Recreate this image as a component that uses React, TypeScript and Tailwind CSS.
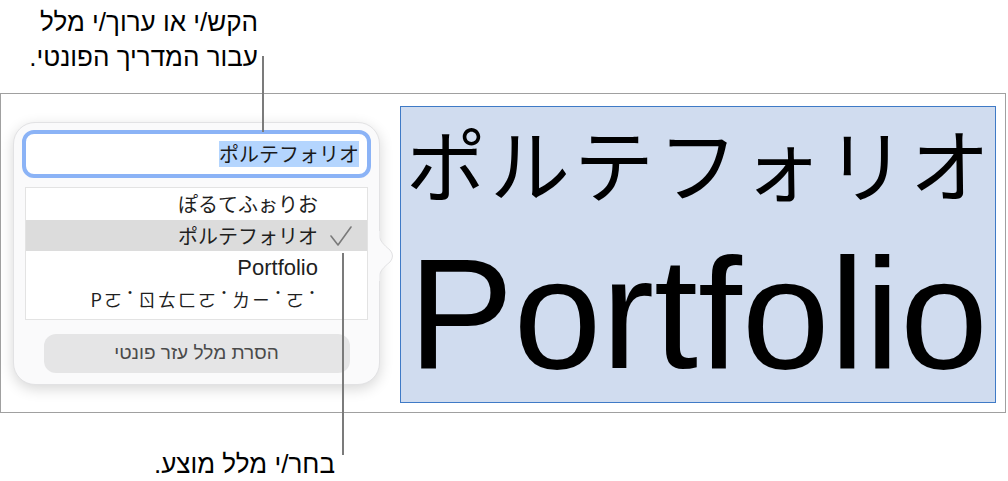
import React from "react";

const hebrew = "font-['Liberation_Sans','DejaVu_Sans',sans-serif]";
const jp = "font-['Noto_Sans_CJK_JP',sans-serif]";

// Suggested readings shown in the popover list
const suggestions = [
  { text: "ぽるてふぉりお", font: jp, size: "text-[20px]" },
  { text: "ポルテフォリオ", font: jp, size: "text-[20px]", selected: true },
  { text: "Portfolio", font: "font-['Liberation_Sans',sans-serif]", size: "text-[22px]" },
];

// Bopomofo reading, tone dots are raised
const bopomofo = ["P", "ㄛ", "˙", "ㄖ", "ㄊ", "ㄈ", "ㄛ", "˙", "ㄌ", "ㄧ", "˙", "ㄛ", "˙"];

function Check() {
  return (
    <svg width="24" height="22" viewBox="0 0 24 22" className="absolute right-[14px] top-[5px]">
      <path d="M2 11 L9 20 L22 2" fill="none" stroke="#7a7a7a" strokeWidth="1.6" strokeLinecap="round" strokeLinejoin="round" />
    </svg>
  );
}

function Popover() {
  return (
    <div className="relative mt-[28px] ml-[12px] w-[367px] h-[263px] rounded-[22px] bg-[#fafafb] border border-[#e2e2e4] shadow-[0_4px_14px_rgba(0,0,0,0.16)] flex flex-col items-center pt-[7px]">
      {/* arrow pointing at the text box */}
      <svg width="18" height="50" viewBox="0 0 18 50" className="absolute -right-[17px] top-[108px]">
        <path d="M0 0 C1 10 6 14 12 19 Q17 25 12 31 C6 36 1 40 0 50 Z" fill="#fafafb" stroke="#e2e2e4" strokeWidth="1" />
        <rect x="0" y="0" width="1.5" height="50" fill="#fafafb" />
      </svg>

      <div className="w-[349px] h-[48px] rounded-[12px] border-[4px] border-[#8bb3f6] bg-white flex items-center justify-end pr-[8px]">
        <span className={`${jp} text-[20px] leading-[26px] bg-[#b4d5fe] text-[#1a1a1a]`}>ポルテフォリオ</span>
      </div>

      <div className="mt-[9px] w-[343px] border border-[#e3e3e3] bg-white pb-[4px]">
        {suggestions.map((s, idx) => (
          <div
            key={idx}
            className={`relative flex items-center justify-end pr-[49px] text-[#1f1f1f] ${s.font} ${s.size} ${s.selected ? "bg-[#dcdcdc] h-[31px]" : "h-[32px]"}`}
          >
            <span>{s.text}</span>
            {s.selected && <Check />}
          </div>
        ))}
        <div className="h-[32px] flex items-center justify-end pr-[48px] text-[#1f1f1f] font-['Noto_Sans_CJK_TC',sans-serif] text-[18px]">
          {bopomofo.map((c, i) =>
            c === "˙" ? (
              <span key={i} className="relative -top-[7px] mx-[3px] text-[16px]">
                {c}
              </span>
            ) : (
              <span key={i} className="mx-[1px]">
                {c}
              </span>
            )
          )}
        </div>
      </div>

      <button className={`mt-[14px] w-[306px] h-[39px] rounded-[12px] bg-[#e5e5e6] text-[#4a4a4a] text-[19px] ${hebrew}`} dir="rtl">
        הסרת מלל עזר פונטי
      </button>
    </div>
  );
}

export default function App() {
  return (
    <div className="relative w-[1008px] h-[481px] bg-white overflow-hidden">
      {/* callout lines */}
      <div className="absolute left-[262px] top-[56px] w-[2px] h-[76px] bg-[#7b7b7b] z-10" />
      <div className="absolute left-[342px] top-[253px] w-[2px] h-[202px] bg-[#7b7b7b] z-10" />

      <div dir="rtl" className={`w-[258px] pt-[5px] text-[26px] leading-[35px] text-black ${hebrew}`}>
        <p>הקש/י או ערוך/י מלל</p>
        <p>עבור המדריך הפונטי.</p>
      </div>

      <div className="mt-[18px] w-[1006px] h-[320px] border border-[#a0a0a0] flex items-start">
        <Popover />

        <div className="mt-[12px] ml-[20px] w-[596px] h-[297px] bg-[#d0dcef] border border-[#3f7ac6] flex flex-col items-center">
          <div className={`${jp} text-[80px] leading-[80px] mt-[14px] tracking-[4px] pl-[4px] text-black`}>ポルテフォリオ</div>
          <div className="font-['Liberation_Sans',sans-serif] text-[158px] leading-[176px] mt-[24px] text-black">Portfolio</div>
        </div>
      </div>

      <div dir="rtl" className={`w-[335px] mt-[34px] text-[26px] leading-[35px] text-black ${hebrew}`}>
        <p>בחר/י מלל מוצע.</p>
      </div>
    </div>
  );
}
